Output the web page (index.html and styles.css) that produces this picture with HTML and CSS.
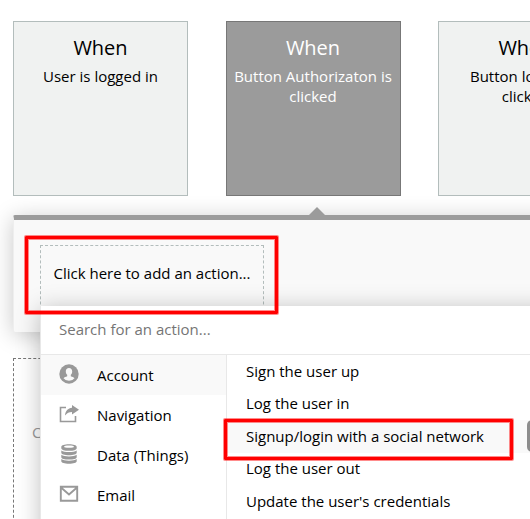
FILE: index.html
```html
<!DOCTYPE html>
<html lang="en">
<head>
<meta charset="utf-8">
<title>Workflow</title>
<link rel="stylesheet" href="styles.css">
</head>
<body>
<main class="workflow">
  <section class="events">
    <article class="event"><h2>When</h2><p>User is logged in</p></article>
    <article class="event event-active"><h2>When</h2><p>Button Authorizaton is clicked</p></article>
    <article class="event"><h2>When</h2><p>Button logout is<br>clicked</p></article>
  </section>
  <section class="actions">
    <span class="caret"></span>
    <button class="add-action">Click here to add an action...</button>
  </section>
  <section class="add-event">C</section>
  <section class="menu">
    <div class="search">Search for an action...</div>
    <div class="menu-body">
      <ul class="categories">
        <li class="selected">
          <svg viewBox="0 0 20 20"><circle cx="10" cy="10" r="9.700"/><path fill="#f9f9f9" d="M10 4c2 0 3.200 1.400 3.200 3.400c0 1.500-.6 2.700-1.400 3.400v1.500c1.500.6 2.700.9 3.700 1.900a7 7 0 0 1-11 0c1-1 2.200-1.300 3.700-1.900v-1.500c-.8-.7-1.400-1.900-1.400-3.400C6.800 5.400 8 4 10 4z"/></svg>
          Account</li>
        <li>
          <svg viewBox="0 0 20 20"><path d="M7 3.500H1.500v14H16.500V12" fill="none" stroke="#999" stroke-width="1.600"/><path d="M13 1L20 5.700L13 10.500V8C10 8 8 9 6 11.500C6.200 7 9 4 13 3.700z"/></svg>
          Navigation</li>
        <li>
          <svg viewBox="0 0 20 20"><path fill-rule="evenodd" d="M10 .3c4.500 0 7.700 1 7.700 2.600v1.300C17.700 5.800 14.500 6.800 10 6.800S2.300 5.800 2.300 4.200V2.900C2.300 1.300 5.500.3 10 .3zM10 1.600c-3 0-5 .5-5 1.100s2 1.100 5 1.100s5-.5 5-1.100s-2-1.100-5-1.100z"/><path d="M2.300 6.500C4 7.600 6.500 8 10 8s6-.4 7.700-1.500v2.300c0 1.500-3.200 2.500-7.700 2.500s-7.700-1-7.700-2.500zM2.300 10.800C4 11.900 6.500 12.400 10 12.400s6-.5 7.700-1.600v2.400c0 1.500-3.200 2.400-7.700 2.400s-7.700-.9-7.700-2.400zM2.300 15.100c1.700 1.100 4.200 1.600 7.700 1.600s6-.5 7.700-1.600v2.200c0 1.500-3.200 2.500-7.700 2.500s-7.700-1-7.700-2.500z"/></svg>
          Data (Things)</li>
        <li>
          <svg viewBox="0 0 20 20"><path d="M1.800 2.800h16.400v14H1.800zM2 3.500L10 10.500L18 3.500" fill="none" stroke="#999" stroke-width="1.900"/></svg>
          Email</li>
      </ul>
      <ul class="options">
        <li>Sign the user up</li>
        <li class="raised">Log the user in</li>
        <li class="selected">Signup/login with a social network<span class="badge"></span></li>
        <li class="raised">Log the user out</li>
        <li>Update the user's credentials</li>
      </ul>
    </div>
  </section>
  <span class="mark mark-add"></span>
  <span class="mark mark-login"></span>
</main>
</body>
</html>
```
FILE: styles.css
```css
* { box-sizing: border-box; }
body {
  margin: 0;
  background: #fff;
  color: #000;
  font: 15px/20px "Open Sans", sans-serif;
}
h2, p, ul { margin: 0; padding: 0; }
ul { list-style: none; }
.workflow {
  position: relative;
  width: 530px;
  height: 519px;
  overflow: hidden;
  padding: 21px 0 0 13px;
}
.events { display: flex; gap: 37.5px; width: 700px; position: relative; z-index: 1; }
.event {
  width: 175px;
  height: 175px;
  padding: 12px 7px;
  border: 1px solid #b3bdbc;
  background: #f0f2f1;
  text-align: center;
}
.event h2 { font-size: 20px; font-weight: 400; line-height: 28px; margin-bottom: 4px; }
.event-active { background: #9b9b9b; border-color: #777; color: #fff; }
.actions {
  position: relative;
  width: 700px;
  height: 117px;
  margin-top: 19px;
  padding: 25px 0 0 27px;
  border-top: 5px solid #9b9b9b;
  border-left: 1px solid #eee;
  border-radius: 2px;
  background: #f9f9f9;
  box-shadow: 0 3px 22px rgba(0, 0, 0, .22);
}
.caret {
  position: absolute;
  left: 295px;
  top: -13px;
  border: 8px solid transparent;
  border-top: 0;
  border-bottom-color: #9b9b9b;
}
.add-action {
  display: block;
  width: 224px;
  height: 80px;
  margin-left: -1px;
  padding: 0 0 24px;
  border: 1px dashed #b3bdbc;
  background: none;
  color: #000;
  font: inherit;
}
.add-event {
  width: 175px;
  height: 175px;
  margin-top: 26px;
  padding: 63px 18px;
  border: 1px dashed #777;
  color: #999;
}
.menu {
  position: absolute;
  left: 40px;
  top: 306px;
  width: 560px;
  height: 260px;
  border-left: 1px solid #e8e8e8;
  background: #fff;
  box-shadow: 0 3px 22px rgba(0, 0, 0, .25);
}
.search {
  height: 49px;
  padding: 13px 18px;
  border-bottom: 1px solid #e8e8e8;
  color: #757575;
}
.menu-body { display: flex; }
.categories { width: 186px; height: 210px; border-right: 1px solid #e8e8e8; }
.categories li { display: flex; align-items: center; height: 40px; padding-left: 18px; gap: 18px; }
.categories svg { width: 20px; height: 20px; fill: #999; margin-bottom: 3px; }
.selected { background: #f9f9f9; }
.options { flex: 1; }
.options li { position: relative; height: 32.5px; padding: 6px 19px; white-space: nowrap; }
.options .raised { padding-top: 5px; }
.badge {
  position: absolute;
  left: 300px;
  top: 0;
  width: 30px;
  height: 32px;
  border-radius: 5px;
  background: #8c8c8c;
}
.mark {
  position: absolute;
  border: 3px solid #f00;
  border-radius: 1px;
  box-shadow: 0 0 0 1px rgba(255, 0, 0, .45), inset 0 0 0 1px rgba(255, 0, 0, .45);
}
.mark-add { left: 25px; top: 236px; width: 253px; height: 78px; }
.mark-login { left: 224px; top: 419px; width: 289px; height: 41px; }
```
